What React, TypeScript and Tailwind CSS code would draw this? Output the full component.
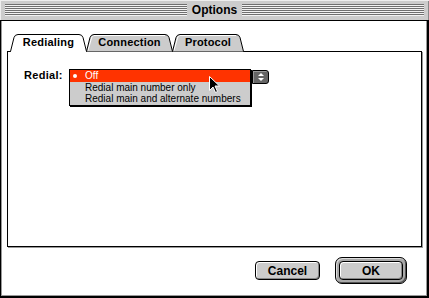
import React from 'react';

const Stripes = () => (
  <div className="flex-1 flex flex-col">
    {[0, 1, 2, 3, 4, 5].map(i => (
      <div key={i} className="h-[2px] border-t border-[#6f6f6f] bg-[#f2f2f2]" />
    ))}
  </div>
);

const Tab = ({ label, width, active }: { label: string; width: number; active?: boolean }) => {
  const h = 17;
  const outline = `M0.5,${h + 0.5} L4,3.5 Q5,0.5 8,0.5 L${width - 8},0.5 Q${width - 5},0.5 ${width - 4},3.5 L${width - 0.5},${h + 0.5}`;
  return (
    <div
      className={`relative flex items-center justify-center -ml-px first:ml-0 ${active ? 'z-20 h-[18px] self-start' : 'z-10 h-[17px]'}`}
      style={{ width }}
    >
      <svg className="absolute left-0 top-0" width={width} height={h + 1}>
        <path d={outline + ' Z'} fill={active ? '#ffffff' : '#cccccc'} stroke="none" />
        {!active && <path d={`M2,${h - 0.5} L5.5,4 Q6,1.5 8,1.5 L${width - 8},1.5`} fill="none" stroke="#ffffff" />}
        <path d={outline} fill="none" stroke="#000" />
        {active && <rect x={1} y={h} width={width - 2} height={1} fill="#fff" />}
      </svg>
      <span className={`relative text-[11px] font-bold leading-none text-black tracking-[0.2px] ${active ? '-mt-px' : ''}`}>{label}</span>
    </div>
  );
};

const Cursor = () => (
  <svg width="12" height="18" viewBox="0 0 12 18" className="absolute left-[140px] top-[7px]">
    <path d="M0.5,0.5 L0.5,14.5 L4,11 L6.5,16.5 L8.5,15.5 L6,10 L10.5,10 Z" fill="#000" stroke="#fff" strokeWidth="1" />
  </svg>
);

const App = () => {
  const items = ['Off', 'Redial main number only', 'Redial main and alternate numbers'];

  return (
    <div className="w-[429px] h-[298px] bg-white flex flex-col font-['Liberation_Sans',Arial,sans-serif] text-black select-none">
      {/* title bar */}
      <div className="h-[21px] bg-[#cccccc] border-b border-black flex items-center px-[5px] shadow-[inset_1px_1px_0_#eeeeee,inset_-1px_0_0_#888888]">
        <Stripes />
        <div className="px-[5px] text-[12px] font-bold leading-none pb-px">Options</div>
        <Stripes />
      </div>

      <div className="flex-1 flex flex-col border-l border-black border-r-2 border-b-2 shadow-[inset_1px_0_0_#999,inset_-1px_-1px_0_#999] pl-[6px] pr-[5px] pt-[13px]">
        {/* tabs */}
        <div className="relative z-10 h-[17px] flex items-end pl-[3px]">
          <Tab label="Redialing" width={77} active />
          <Tab label="Connection" width={87} />
          <Tab label="Protocol" width={72} />
        </div>

        {/* panel */}
        <div className="h-[196px] border border-black shadow-[1px_1px_0_#999] pl-[16px] pt-[17px]">
          <div className="flex items-start">
            <div className="w-[45px] h-[12px] flex items-center text-[11px] font-bold leading-none tracking-[0.3px]">Redial:</div>
            <div className="relative flex items-start">
              <div className="w-[182px] border border-black shadow-[1px_1px_0_#000] bg-[#cccccc] flex flex-col">
                {items.map((it, i) => (
                  <div
                    key={it}
                    className={`relative flex items-center pl-[15px] text-[10px] leading-none ${i === 0 ? 'h-[12px] bg-[#ff3300] text-white' : 'h-[11.5px]'}`}
                  >
                    {i === 0 && <span className="absolute left-[3px] top-[4px] w-[4px] h-[4px] rounded-full bg-white" />}
                    {it}
                  </div>
                ))}
              </div>
              <div className="ml-px mt-px w-[17px] h-[14px] bg-[#666666] border border-black rounded-r-[3px] flex flex-col items-center justify-center gap-[2px] shadow-[inset_1px_1px_0_#999]">
                <div className="w-0 h-0 border-l-[3px] border-r-[3px] border-b-[3px] border-l-transparent border-r-transparent border-b-white" />
                <div className="w-0 h-0 border-l-[3px] border-r-[3px] border-t-[3px] border-l-transparent border-r-transparent border-t-white" />
              </div>
              <Cursor />
            </div>
          </div>
        </div>

        {/* buttons */}
        <div className="flex justify-end items-center gap-[15px] pr-[15px] mt-[10px]">
          <button className="w-[65px] h-[19px] rounded-[4px] border border-black bg-[#cccccc] shadow-[inset_1px_1px_0_#fff,inset_-1px_-1px_0_#888] text-[12px] font-bold leading-none">
            Cancel
          </button>
          <div className="w-[72px] h-[27px] rounded-[7px] border border-black bg-[#aaaaaa] shadow-[inset_1px_1px_0_#ddd,inset_-1px_-1px_0_#555] flex items-center justify-center">
            <button className="w-[64px] h-[19px] rounded-[4px] border border-black bg-[#cccccc] shadow-[inset_1px_1px_0_#fff,inset_-1px_-1px_0_#888] text-[12px] font-bold leading-none">
              OK
            </button>
          </div>
        </div>
      </div>
    </div>
  );
};

export default App;
